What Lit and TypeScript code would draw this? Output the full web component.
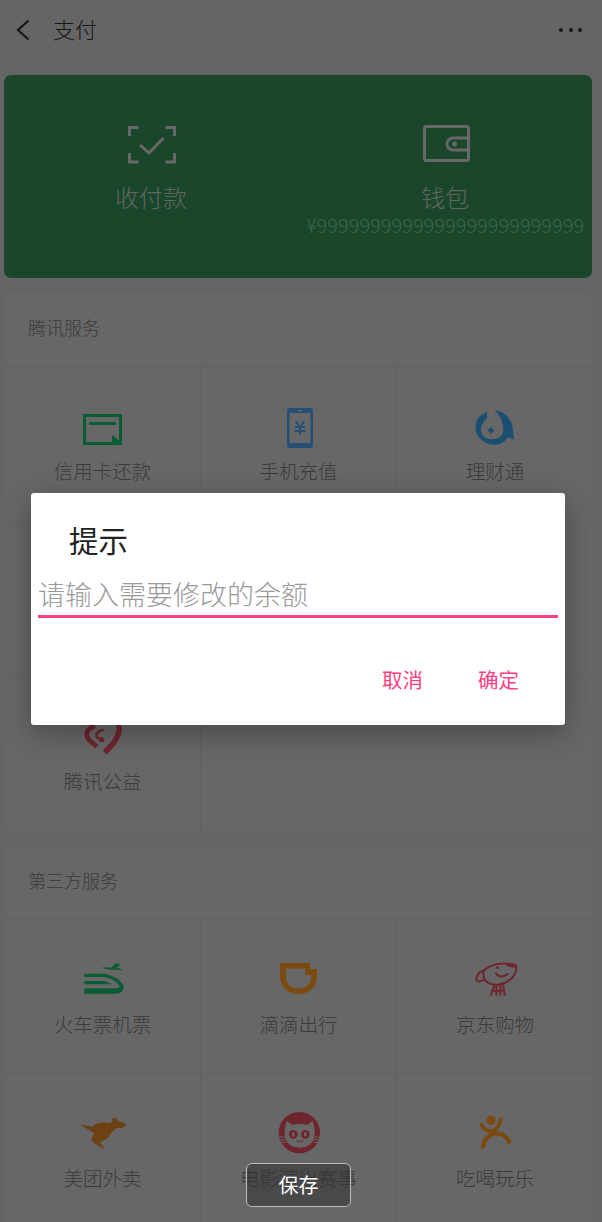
import { LitElement, css, html, svg } from 'lit';
import { customElement } from 'lit/decorators.js';

const RED = '#6e252d';
const BROWN = '#7a4a10';
const GREEN = '#095c34';
const BLUE = '#264f75';
const BG = '#676767';

const icons = {
  card: svg`<svg class="icon" viewBox="0 0 48 48">
    <path d="M5.5 10.5h36v28h-36z" fill="none" stroke="${GREEN}" stroke-width="3"/>
    <path d="M10 17h27v3H10zM33 30l10 8v2H33z" fill="${GREEN}"/>
  </svg>`,
  phone: svg`<svg class="icon" viewBox="0 0 48 48">
    <rect x="12" y="3" width="26" height="40" rx="3" fill="${BLUE}"/>
    <rect x="14.5" y="8" width="21" height="30" fill="${BG}"/>
    <path d="M23 5h4v1.2h-4z" fill="${BG}"/>
    <path d="M20.5 16l4.5 6 4.5-6M19.5 22h11M19.5 26h11M25 22v8" fill="none" stroke="${BLUE}" stroke-width="2"/>
  </svg>`,
  fish: svg`<svg class="icon" viewBox="30 12 144 144">
    <path d="M78 32C70 40 52 42 46 62 38 85 48 118 85 130 110 135 130 127 142 108L160 116C155 100 158 92 155 80 150 50 125 28 100 28 112 38 120 50 122 62 128 76 130 92 120 106 105 120 72 118 62 98 54 80 68 62 78 52Z" fill="#1a4f71"/>
    <path d="M90 78l10 10-10 10-10-10z" fill="#1a4f71"/>
  </svg>`,
  heart: svg`<svg class="icon" viewBox="24 -3 144 144">
    <path d="M72 30C42 38 42 62 58 76L78 92" fill="none" stroke="${RED}" stroke-width="14"/>
    <path d="M98 42C76 44 70 62 84 68" fill="none" stroke="${RED}" stroke-width="8"/>
    <circle cx="92" cy="71" r="8" fill="${RED}"/>
    <path d="M136 24L152 30C158 62 130 94 106 116L96 102C120 80 140 60 136 24Z" fill="${RED}"/>
  </svg>`,
  train: svg`<svg class="icon" viewBox="54 9 144 144">
    <path d="M125 36L150 38 165 25 178 28 168 38 188 46 165 44 150 44 130 41Z" fill="${GREEN}"/>
    <path d="M70 56H132C155 62 180 74 188 92 190 106 178 116 165 116H70V100H165C172 100 176 96 176 92 165 78 150 70 130 66H70Z" fill="${GREEN}"/>
    <path d="M70 78H132L152 88H70Z" fill="${GREEN}"/>
  </svg>`,
  didi: svg`<svg class="icon" viewBox="0 0 48 48">
    <path fill-rule="evenodd" d="M5 5H35V11H42V19C42 29 34 36 23.5 36 13 36 5 29 5 19ZM11 10.5V19C11 26 16 30.5 23.5 30.5 31 30.5 36.5 26 36.5 17H30V10.5Z" fill="${BROWN}"/>
  </svg>`,
  jd: svg`<svg class="icon" viewBox="30 24 144 144">
    <g fill="none" stroke="${RED}" stroke-width="6" stroke-linecap="round">
      <path d="M68 62C90 40 130 36 165 46 170 70 150 98 110 104 92 105 78 98 70 88 60 96 48 98 46 88 46 76 58 62 68 62 66 72 68 82 70 88"/>
      <path d="M105 70C115 85 130 80 140 72M100 105L90 135M106 105V135M118 104V135M126 100L131 135M94 122H126"/>
    </g>
    <path d="M135 40L165 45 160 53 140 50Z" fill="${RED}"/>
    <circle cx="110" cy="53" r="4" fill="${RED}"/>
  </svg>`,
  kangaroo: svg`<svg class="icon" viewBox="39 21 144 144">
    <path d="M40 58L80 65C90 54 110 50 125 55L140 50 137 40 148 38 158 48 183 58 170 68 150 70 135 85 125 100 102 112 116 132 105 128 85 115 75 105 85 85 60 70Z" fill="#6c4114"/>
  </svg>`,
  cat: svg`<svg class="icon" viewBox="27 21 144 144">
    <ellipse cx="100" cy="83" rx="62" ry="62" fill="${RED}"/>
    <path d="M62 48L80 60C92 56 110 56 122 60L140 48C146 65 148 85 144 100 138 120 120 128 102 128 82 128 64 120 58 100 54 85 56 65 62 48Z" fill="${BG}"/>
    <circle cx="82" cy="88" r="13" fill="${RED}"/>
    <circle cx="118" cy="88" r="13" fill="${RED}"/>
    <ellipse cx="82" cy="88" rx="4" ry="7" fill="${BG}"/>
    <ellipse cx="118" cy="88" rx="4" ry="7" fill="${BG}"/>
    <path d="M92 106C96 114 100 112 101 106 102 112 108 114 112 106" fill="none" stroke="${RED}" stroke-width="3"/>
    <path d="M38 96H56M40 105L58 103M44 114L60 110M145 96H162M144 103L160 105M142 110L156 114" stroke="${BG}" stroke-width="3"/>
  </svg>`,
  person: svg`<svg class="icon" viewBox="15 21 144 144">
    <circle cx="75" cy="46" r="14" fill="${BROWN}"/>
    <path d="M45 55C52 78 76 84 90 72 98 64 103 52 105 38" fill="none" stroke="${BROWN}" stroke-width="11"/>
    <path d="M50 130C52 102 72 86 92 85 110 85 125 98 132 115" fill="none" stroke="${BROWN}" stroke-width="13"/>
  </svg>`,
};

type Item = { label: string; icon: keyof typeof icons } | null;

const tencent: Item[] = [
  { label: '信用卡还款', icon: 'card' },
  { label: '手机充值', icon: 'phone' },
  { label: '理财通', icon: 'fish' },
  null,
  null,
  null,
  { label: '腾讯公益', icon: 'heart' },
];

const thirdParty: Item[] = [
  { label: '火车票机票', icon: 'train' },
  { label: '滴滴出行', icon: 'didi' },
  { label: '京东购物', icon: 'jd' },
  { label: '美团外卖', icon: 'kangaroo' },
  { label: '电影演出赛事', icon: 'cat' },
  { label: '吃喝玩乐', icon: 'person' },
];

@customElement('app-root')
export class AppRoot extends LitElement {
  static override styles = css`
    :host {
      display: block;
      position: relative;
      height: 1222px;
      overflow: hidden;
      background: #656565;
      font-family: 'Noto Sans CJK SC', 'Noto Sans', sans-serif;
      font-weight: 300;
    }

    .header {
      display: flex;
      align-items: center;
      height: 60px;
      padding: 0 20px 0 16px;
      color: #161616;
      font-size: 22px;
    }

    .back {
      width: 14px;
      height: 22px;
      margin-right: 23px;
    }

    .header-title {
      padding-bottom: 4px;
    }

    .dots {
      display: flex;
      gap: 5.5px;
      margin-left: auto;
    }

    .dots span {
      width: 4px;
      height: 4px;
      border-radius: 50%;
      background: #161616;
    }

    .wallet {
      display: grid;
      grid-template-columns: 1fr 1fr;
      height: 203px;
      margin: 15px 10px 14px 4px;
      padding-top: 45px;
      box-sizing: border-box;
      border-radius: 7px;
      background: #1a472b;
    }

    .wallet-item {
      display: flex;
      flex-direction: column;
      align-items: center;
    }

    .wallet-icon {
      width: 48px;
      height: 48px;
      overflow: visible;
    }

    .wallet-label {
      margin-top: 12px;
      color: #626663;
      font-size: 24px;
      line-height: 34px;
    }

    .amount {
      color: #3b664a;
      font-size: 20px;
      line-height: 24px;
      margin-top: -1px;
      white-space: nowrap;
    }

    .section {
      margin: 0 10px 14px 4px;
      border-radius: 7px;
      background: #676767;
    }

    .section-title {
      height: 74px;
      box-sizing: border-box;
      padding: 23px 24px 0;
      color: #3a3a3a;
      font-size: 18px;
      line-height: 24px;
    }

    .grid {
      display: grid;
      grid-template-columns: repeat(3, 196px);
      padding-left: 1px;
    }

    .tall {
      grid-auto-rows: 155px;
    }

    .short {
      grid-auto-rows: 154px;
    }

    .cell {
      display: flex;
      flex-direction: column;
      align-items: center;
      box-sizing: border-box;
      padding-top: 38px;
      border-top: 1px solid #616161;
      border-right: 1px solid #616161;
    }

    .cell:nth-child(3n) {
      border-right: none;
    }

    .blank {
      grid-column: span 2;
      border-right: none;
    }

    .icon {
      flex: none;
      width: 48px;
      height: 48px;
      overflow: hidden;
    }

    .cell-label {
      margin-top: 4px;
      color: #3a3a3a;
      font-size: 19.5px;
      line-height: 28px;
      white-space: nowrap;
    }

    .dialog {
      position: absolute;
      left: 31px;
      top: 493px;
      width: 534px;
      height: 232px;
      box-sizing: border-box;
      padding: 24px 7px 0;
      border-radius: 3px;
      background: #fff;
      box-shadow: 0 8px 28px rgba(0, 0, 0, 0.3);
      display: flex;
      flex-direction: column;
    }

    .dialog-title {
      padding-left: 31px;
      color: #222;
      font-size: 29.5px;
      line-height: 44px;
      font-weight: 400;
    }

    .field {
      margin-top: 11px;
      height: 43px;
      color: #9a9a9a;
      font-size: 27px;
      line-height: 44px;
      border-bottom: 3px solid #ff4081;
    }

    .actions {
      display: flex;
      justify-content: flex-end;
      gap: 55px;
      margin-top: 47px;
      padding-right: 39px;
      color: #ff4081;
      font-size: 20.5px;
      line-height: 28px;
      font-weight: 400;
    }

    .toast {
      position: absolute;
      left: 246px;
      top: 1163px;
      width: 105px;
      height: 44px;
      box-sizing: border-box;
      padding-bottom: 2px;
      display: flex;
      align-items: center;
      justify-content: center;
      border: 1.5px solid #bbb;
      border-radius: 6px;
      background: rgba(50, 50, 50, 0.55);
      color: #fff;
      font-size: 20px;
      font-weight: 400;
    }
  `;

  private renderCell(item: Item) {
    if (!item) return html`<div class="cell"></div>`;
    return html`<div class="cell">${icons[item.icon]}<div class="cell-label">${item.label}</div></div>`;
  }

  override render() {
    return html`
      <div class="header">
        <svg class="back" viewBox="0 0 14 22">
          <path d="M12.5 1.5L2 11l10.5 9.5" fill="none" stroke="#161616" stroke-width="2.2" />
        </svg>
        <span class="header-title">支付</span>
        <div class="dots"><span></span><span></span><span></span></div>
      </div>

      <div class="wallet">
        <div class="wallet-item">
          <svg class="wallet-icon" viewBox="-1 0 48 48">
            <path
              d="M1.5 16V7.5H10.5M37.5 7.5H46.5V16M1.5 33V42H10.5M37.5 42H46.5V33M12 25L21 33 35.5 18"
              fill="none"
              stroke="#686868"
              stroke-width="3"
            />
          </svg>
          <div class="wallet-label">收付款</div>
        </div>
        <div class="wallet-item">
          <svg class="wallet-icon" viewBox="-2 0 48 48">
            <rect x="1.5" y="6.5" width="44" height="34" rx="2" fill="none" stroke="#686868" stroke-width="3" />
            <path d="M46 18H30a6 6 0 0 0 0 12H46" fill="none" stroke="#686868" stroke-width="3" />
            <circle cx="31.5" cy="24" r="2.5" fill="#686868" />
          </svg>
          <div class="wallet-label">钱包</div>
          <div class="amount">¥9999999999999999999999999</div>
        </div>
      </div>

      <div class="section">
        <div class="section-title">腾讯服务</div>
        <div class="grid tall">
          ${tencent.map((item) => this.renderCell(item))}
          <div class="cell blank"></div>
        </div>
      </div>

      <div class="section">
        <div class="section-title">第三方服务</div>
        <div class="grid short">${thirdParty.map((item) => this.renderCell(item))}</div>
      </div>

      <div class="dialog">
        <div class="dialog-title">提示</div>
        <div class="field">请输入需要修改的余额</div>
        <div class="actions"><span>取消</span><span>确定</span></div>
      </div>

      <div class="toast">保存</div>
    `;
  }
}
